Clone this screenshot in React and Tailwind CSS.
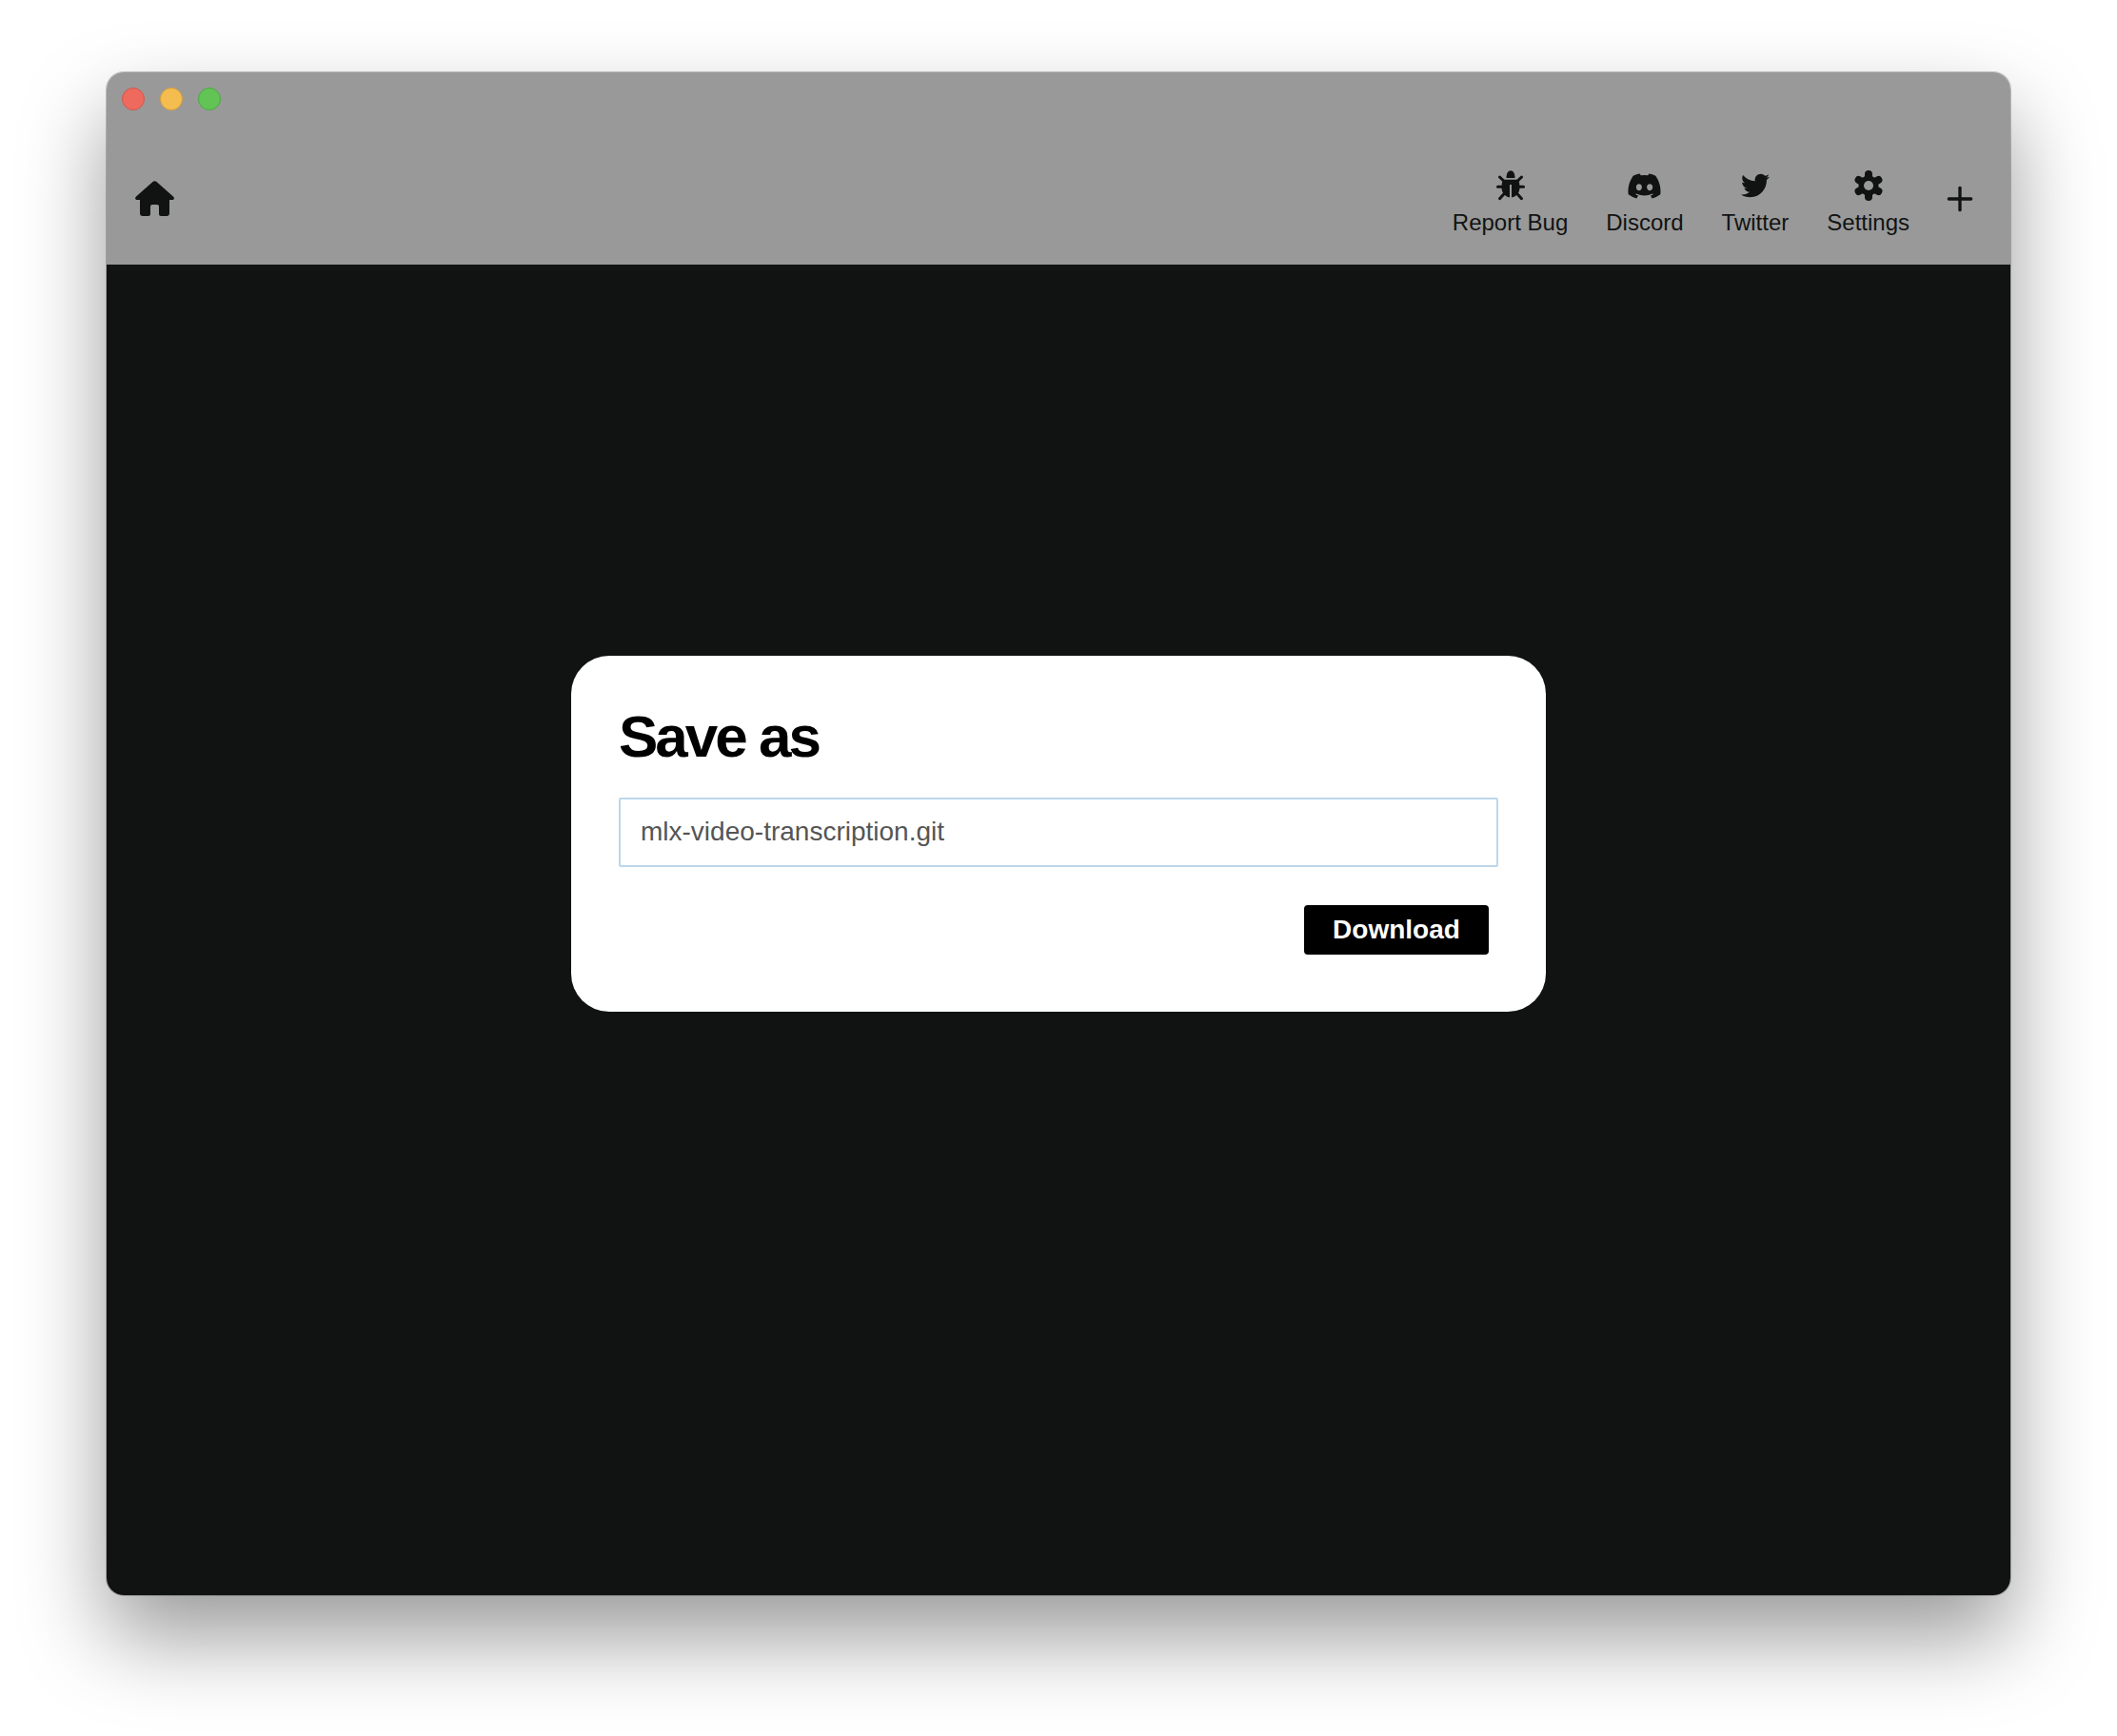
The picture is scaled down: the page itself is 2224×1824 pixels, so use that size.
import React from 'react';
import { FaDiscord, FaTwitter } from 'react-icons/fa';
import { FiPlus } from 'react-icons/fi';

const BugIcon = () => (
  <svg viewBox="0 0 30 32" className="w-[30px] h-[32px]" fill="currentColor" stroke="none">
    <path d="M10.5 8 C10.5 3 12.5 .3 15 .3 C17.5 .3 19.5 3 19.5 8 Z" />
    <path d="M8.5 9.7 H21.5 C23.5 10 24.5 13 24.5 18 C24.5 24 20 28.5 15 28.5 C10 28.5 5.5 24 5.5 18 C5.5 13 6.5 10 8.5 9.7 Z" />
    <g stroke="currentColor" strokeWidth="3" strokeLinecap="round">
      <line x1="1.5" y1="17.3" x2="28.5" y2="17.3" />
      <line x1="3.5" y1="7" x2="8" y2="11.3" />
      <line x1="26.5" y1="7" x2="22" y2="11.3" />
      <line x1="3.5" y1="29.7" x2="8" y2="24.7" />
      <line x1="26.5" y1="29.7" x2="22" y2="24.7" />
    </g>
    <rect x="14" y="15" width="2" height="14" fill="#999999" />
  </svg>
);

const GearIcon = () => (
  <svg viewBox="0 0 32 32" className="w-[32px] h-[32px]" fill="currentColor">
    <circle cx="16" cy="16" r="10.5" />
    <g stroke="currentColor" strokeWidth="8" strokeLinecap="round">
      <line x1="16" y1="16" x2="16" y2="4" />
      <line x1="16" y1="16" x2="16" y2="28" />
      <line x1="16" y1="16" x2="26.4" y2="10" />
      <line x1="16" y1="16" x2="5.6" y2="10" />
      <line x1="16" y1="16" x2="26.4" y2="22" />
      <line x1="16" y1="16" x2="5.6" y2="22" />
    </g>
    <circle cx="16" cy="16" r="5" fill="#999999" />
  </svg>
);

const navItems = [
  { label: 'Report Bug', icon: <BugIcon /> },
  { label: 'Discord', icon: <FaDiscord className="w-[37px] h-[37px]" /> },
  { label: 'Twitter', icon: <FaTwitter className="w-[30px] h-[30px]" /> },
  { label: 'Settings', icon: <GearIcon /> },
];

const HomeIcon = () => (
  <svg viewBox="0 0 41 37" className="w-[41px] h-[37px]" fill="currentColor">
    <path d="M18.8 .7 Q20.5 -.4 22.2 .7 L40 16.6 Q41.6 18.2 40.4 19.5 Q39.8 20 38.8 20 H36 V34 Q36 37 33 37 H27 Q25 37 25 35 V27 Q25 25 23 25 H18 Q16 25 16 27 V35 Q16 37 14 37 H8 Q5 37 5 34 V20 H2.2 Q1.2 20 .6 19.5 Q-.6 18.2 1 16.6 Z" />
  </svg>
);

const App = () => {
  return (
    <div className="w-[2224px] h-[1824px] bg-white pt-[76px] pl-[112px] overflow-hidden font-['Liberation_Sans',Arial,sans-serif]">
      <div className="w-[2000px] h-[1600px] flex flex-col rounded-[18px] overflow-hidden shadow-[0_44px_90px_rgba(0,0,0,0.4),0_0_0_1px_rgba(0,0,0,0.22)]">
        <header className="h-[202px] bg-[#999999] flex flex-col">
          <div className="flex gap-4 pl-4 pt-4">
            <span className="w-6 h-6 rounded-full bg-[#ee6a5f] border border-[#d0574d]" />
            <span className="w-6 h-6 rounded-full bg-[#f5bd4f] border border-[#d69f3c]" />
            <span className="w-6 h-6 rounded-full bg-[#61c454] border border-[#4fa844]" />
          </div>
          <div className="flex items-start justify-between pl-[30px] pr-[33px] mt-[63px] text-[#111312]">
            <div className="mt-[11px]">
              <HomeIcon />
            </div>
            <div className="flex items-start gap-[33px]">
              <div className="flex items-start gap-[40px]">
                {navItems.map(({ label, icon }) => (
                  <div key={label} className="flex flex-col items-center">
                    <div className="h-[32px] flex items-center justify-center">{icon}</div>
                    <span className="text-[24px] leading-[28px] mt-[9px]">{label}</span>
                  </div>
                ))}
              </div>
              <FiPlus className="w-[40px] h-[40px] mt-[10px]" />
            </div>
          </div>
        </header>
        <main className="flex-1 bg-[#111312] flex justify-center pt-[411px]">
          <div className="w-[1024px] h-[374px] bg-white rounded-[40px] px-[50px] pt-[51px]">
            <h1 className="text-[62px] leading-[68px] font-bold tracking-[-3px] text-black">Save as</h1>
            <input
              readOnly
              value="mlx-video-transcription.git"
              className="mt-[30px] w-full h-[73px] pl-[21px] pr-[21px] pb-[2px] text-[28px] text-[#555555] bg-white border-2 border-[#bcd7eb] rounded-[2px] outline-none"
            />
            <div className="flex justify-end pr-[10px] mt-[40px]">
              <button className="w-[194px] h-[52px] bg-black text-white text-[28px] font-bold rounded-[4px]">Download</button>
            </div>
          </div>
        </main>
      </div>
    </div>
  );
};

export default App;
